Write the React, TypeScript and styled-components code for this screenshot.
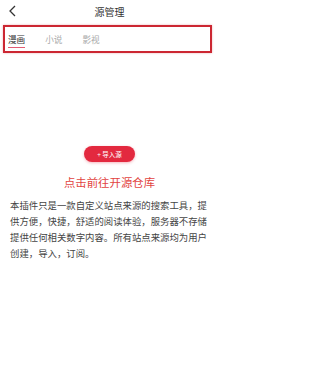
import styled, { createGlobalStyle } from "styled-components";

const Global = createGlobalStyle`
  html, body {
    margin: 0;
    padding: 0;
    background: #ffffff;
  }
  body {
    font-family: "Noto Sans CJK SC", "Noto Sans", sans-serif;
  }
`;

const Page = styled.div`
  width: 219px;
  min-height: 376px;
  background: #fff;
  display: flex;
  flex-direction: column;
`;

const Header = styled.div`
  height: 24px;
  display: flex;
  align-items: center;
  justify-content: center;
  position: relative;
`;

const Back = styled.div`
  position: absolute;
  left: 8px;
  top: 5px;
  width: 9px;
  height: 12px;
  display: flex;
`;

const Title = styled.div`
  font-size: 10px;
  line-height: 12px;
  color: #333;
  margin-top: 0px;
`;

const TabBar = styled.div`
  margin: 1px 7px 0 3px;
  height: 24px;
  border: 2px solid #cc2732;
  box-shadow: 0 0 2px rgba(200, 30, 40, 0.35);
  display: flex;
  align-items: flex-start;
  gap: 20px;
  padding-left: 3px;
`;

const Tab = styled.div<{ $active?: boolean }>`
  display: flex;
  flex-direction: column;
  align-items: stretch;
  padding-top: 7px;
  font-size: 8.6px;
  line-height: 10px;
  color: ${(p) => (p.$active ? "#333" : "#aaa")};
`;

const Underline = styled.div`
  height: 1.2px;
  margin-top: 3px;
  background: #e35a72;
`;

const Center = styled.div`
  display: flex;
  flex-direction: column;
  align-items: center;
`;

const ImportButton = styled.button`
  margin-top: 93px;
  width: 51px;
  height: 16px;
  border: none;
  border-radius: 8px;
  background: #e3293f;
  color: #fff;
  font-family: inherit;
  font-size: 6.5px;
  line-height: 16px;
  padding: 0;
  box-shadow: 0 1px 3px rgba(227, 41, 63, 0.35);
`;

const RepoLink = styled.div`
  margin-top: 13px;
  font-size: 11.4px;
  line-height: 14px;
  color: #e2443f;
`;

const Desc = styled.p`
  margin: 8px 0 0;
  padding: 0 9px 0 10px;
  font-size: 9.4px;
  line-height: 16px;
  color: #444;
`;

export default function App() {
  return (
    <Page>
      <Global />
      <Header>
        <Back>
          <svg width="9" height="12" viewBox="0 0 9 12">
            <path d="M7 1 L2 6 L7 11" fill="none" stroke="#333" strokeWidth="1.3" />
          </svg>
        </Back>
        <Title>源管理</Title>
      </Header>
      <TabBar>
        <Tab $active>
          漫画
          <Underline />
        </Tab>
        <Tab>小说</Tab>
        <Tab>影视</Tab>
      </TabBar>
      <Center>
        <ImportButton>+ 导入源</ImportButton>
        <RepoLink>点击前往开源仓库</RepoLink>
      </Center>
      <Desc>
        本插件只是一款自定义站点来源的搜索工具，提供方便，快捷，舒适的阅读体验，服务器不存储提供任何相关数字内容。所有站点来源均为用户创建，导入，订阅。
      </Desc>
    </Page>
  );
}
